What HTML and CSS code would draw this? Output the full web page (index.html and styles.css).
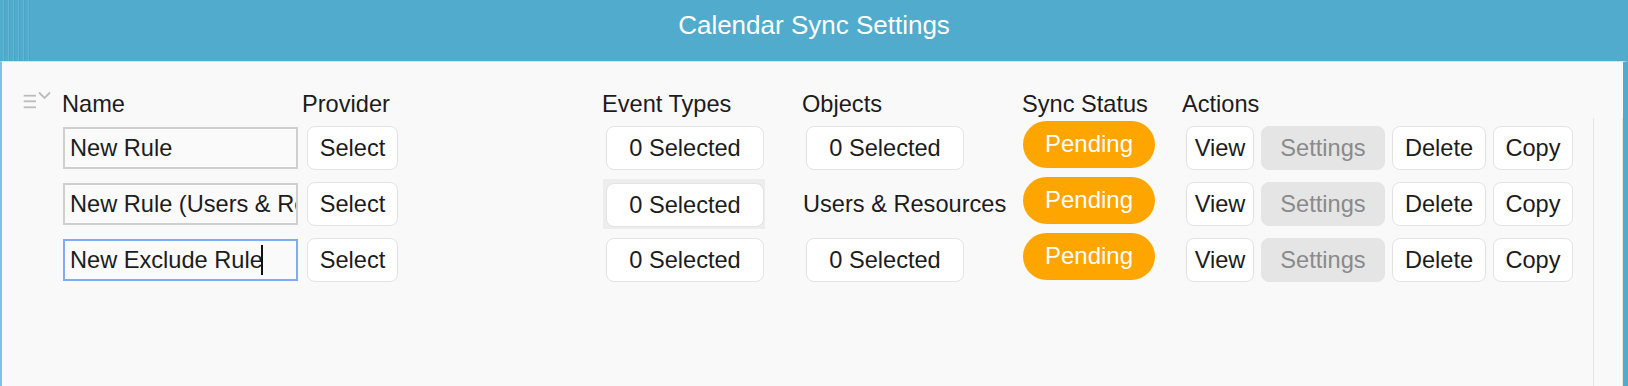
FILE: index.html
```html
<!DOCTYPE html>
<html lang="en">
<head>
    <meta charset="UTF-8">
    <title>Calendar Sync Settings</title>
    <link rel="stylesheet" href="styles.css">
</head>
<body>
    <div class="sync-window">
        <!-- Title bar -->
        <div class="sync-titlebar">
            <div class="sync-grip"></div>
            <div class="sync-title">Calendar Sync Settings</div>
        </div>

        <div class="sync-sheet">
            <div class="sync-main">
                <div class="rules-grid">
                    <!-- Column headers -->
                    <div class="col-menu">
                        <svg width="32" height="22" viewBox="0 0 32 22" fill="none" stroke="#bcbcbc" stroke-width="1.8">
                            <line x1="1.7" y1="7.7" x2="14" y2="7.7"/>
                            <line x1="1.7" y1="13.3" x2="14" y2="13.3"/>
                            <line x1="1.7" y1="19.3" x2="14" y2="19.3"/>
                            <polyline points="17,4.5 22.5,10 28,4.5"/>
                        </svg>
                    </div>
                    <div class="col-head">Name</div>
                    <div class="col-head">Provider</div>
                    <div class="col-head">Event Types</div>
                    <div class="col-head">Objects</div>
                    <div class="col-head">Sync Status</div>
                    <div class="col-head">Actions</div>

                    <!-- Row 1 -->
                    <div></div>
                    <div class="cell"><input class="rule-name" type="text" value="New Rule"></div>
                    <div class="cell"><button class="btn btn-select">Select</button></div>
                    <div class="cell"><button class="btn btn-picker">0 Selected</button></div>
                    <div class="cell"><button class="btn btn-picker">0 Selected</button></div>
                    <div class="cell cell-top"><span class="status-pill">Pending</span></div>
                    <div class="cell actions">
                        <button class="btn btn-view">View</button>
                        <button class="btn btn-settings">Settings</button>
                        <button class="btn btn-delete">Delete</button>
                        <button class="btn btn-copy">Copy</button>
                    </div>

                    <!-- Row 2 -->
                    <div></div>
                    <div class="cell"><input class="rule-name" type="text" value="New Rule (Users &amp; Resources)"></div>
                    <div class="cell"><button class="btn btn-select">Select</button></div>
                    <div class="cell"><div class="picker-hover"><button class="btn btn-picker">0 Selected</button></div></div>
                    <div class="cell"><span class="objects-label">Users &amp; Resources</span></div>
                    <div class="cell cell-top"><span class="status-pill">Pending</span></div>
                    <div class="cell actions">
                        <button class="btn btn-view">View</button>
                        <button class="btn btn-settings">Settings</button>
                        <button class="btn btn-delete">Delete</button>
                        <button class="btn btn-copy">Copy</button>
                    </div>

                    <!-- Row 3 -->
                    <div></div>
                    <div class="cell">
                        <span class="name-field">
                            <input class="rule-name focused" type="text" value="New Exclude Rule">
                            <span class="caret"></span>
                        </span>
                    </div>
                    <div class="cell"><button class="btn btn-select">Select</button></div>
                    <div class="cell"><button class="btn btn-picker">0 Selected</button></div>
                    <div class="cell"><button class="btn btn-picker">0 Selected</button></div>
                    <div class="cell cell-top"><span class="status-pill">Pending</span></div>
                    <div class="cell actions">
                        <button class="btn btn-view">View</button>
                        <button class="btn btn-settings">Settings</button>
                        <button class="btn btn-delete">Delete</button>
                        <button class="btn btn-copy">Copy</button>
                    </div>
                </div>
            </div>
            <div class="sync-gutter"></div>
        </div>
    </div>
</body>
</html>
```

FILE: styles.css
```css
/* Calendar sync settings window */
html, body {
    margin: 0;
    padding: 0;
}

body {
    font-family: 'Liberation Sans', Arial, sans-serif;
    color: #1c1c1c;
    background: #50abcc;
}

.sync-window {
    width: 1628px;
    height: 386px;
    display: flex;
    flex-direction: column;
    background: #50abcc;
    overflow: hidden;
}

/* Title bar */
.sync-titlebar {
    height: 61px;
    display: flex;
    flex-shrink: 0;
}

.sync-grip {
    width: 33px;
    background: repeating-linear-gradient(90deg,
        #50abcc 0, #50abcc 3px,
        #62b6d4 3px, #62b6d4 4px,
        #4aa5c5 4px, #4aa5c5 5px);
}

.sync-title {
    flex: 1;
    text-align: center;
    color: #fff;
    font-size: 26px;
    line-height: 30px;
    padding: 10px 33px 0 0;
}

/* Sheet body */
.sync-sheet {
    flex: 1;
    display: flex;
    background: #f9f9f9;
    border-top: 1px solid #cde6f0;
    border-left: 2px solid #7cc2e4;
    border-right: 5px solid #50abcc;
}

.sync-main {
    flex: 1;
    padding: 26px 0 0 20px;
}

.sync-gutter {
    width: 28px;
    margin-top: 56px;
    border-left: 1px solid #e6e6e6;
    border-right: 1px solid #e6e6e6;
}

/* Rules grid */
.rules-grid {
    display: grid;
    grid-template-columns: 38px 240px 300px 200px 220px 160px auto;
    grid-template-rows: 32px repeat(3, 56px);
    font-size: 23.6px;
}

.col-head {
    line-height: 32px;
    padding-left: 2px;
    white-space: nowrap;
}

.cell {
    display: flex;
    align-items: center;
}

.cell-top {
    align-items: flex-start;
    padding-top: 1px;
}

/* Name input */
.name-field {
    position: relative;
    display: flex;
}

.rule-name {
    width: 235px;
    height: 42px;
    box-sizing: border-box;
    margin-left: 3px;
    padding: 0 0 0 5px;
    border: 2px solid #cfcfcf;
    background: #fafafa;
    font-family: inherit;
    font-size: 23.6px;
    color: #1c1c1c;
    outline: none;
}

.rule-name.focused {
    border-color: #7eadf2;
}

.caret {
    position: absolute;
    left: 201px;
    top: 6px;
    width: 2px;
    height: 30px;
    background: #111;
}

/* Buttons */
.btn {
    height: 44px;
    box-sizing: border-box;
    padding: 0;
    background: #fff;
    border: 1px solid #e3e3e3;
    border-radius: 8px;
    font-family: inherit;
    font-size: 23.6px;
    line-height: 42px;
    color: #1c1c1c;
    text-align: center;
    cursor: pointer;
}

.btn-select {
    width: 91px;
    margin-left: 7px;
}

.btn-picker {
    width: 158px;
    margin-left: 6px;
}

.picker-hover {
    margin-left: 3px;
    padding: 4px 1px 2px 3px;
    background: #ededed;
}

.picker-hover .btn-picker {
    margin-left: 0;
    display: block;
}

.objects-label {
    margin-left: 3px;
    white-space: nowrap;
}

/* Status pill */
.status-pill {
    margin-left: 3px;
    width: 132px;
    height: 47px;
    line-height: 46px;
    border-radius: 24px;
    background: #ffa500;
    color: #fff;
    text-align: center;
    font-size: 24px;
}

/* Action buttons */
.actions {
    gap: 7px;
    padding-left: 6px;
}

.btn-view { width: 68px; }
.btn-delete { width: 94px; }
.btn-copy { width: 80px; }

.btn-settings {
    width: 124px;
    background: #e5e5e5;
    border-color: #e5e5e5;
    color: #8a8a8a;
}
```
